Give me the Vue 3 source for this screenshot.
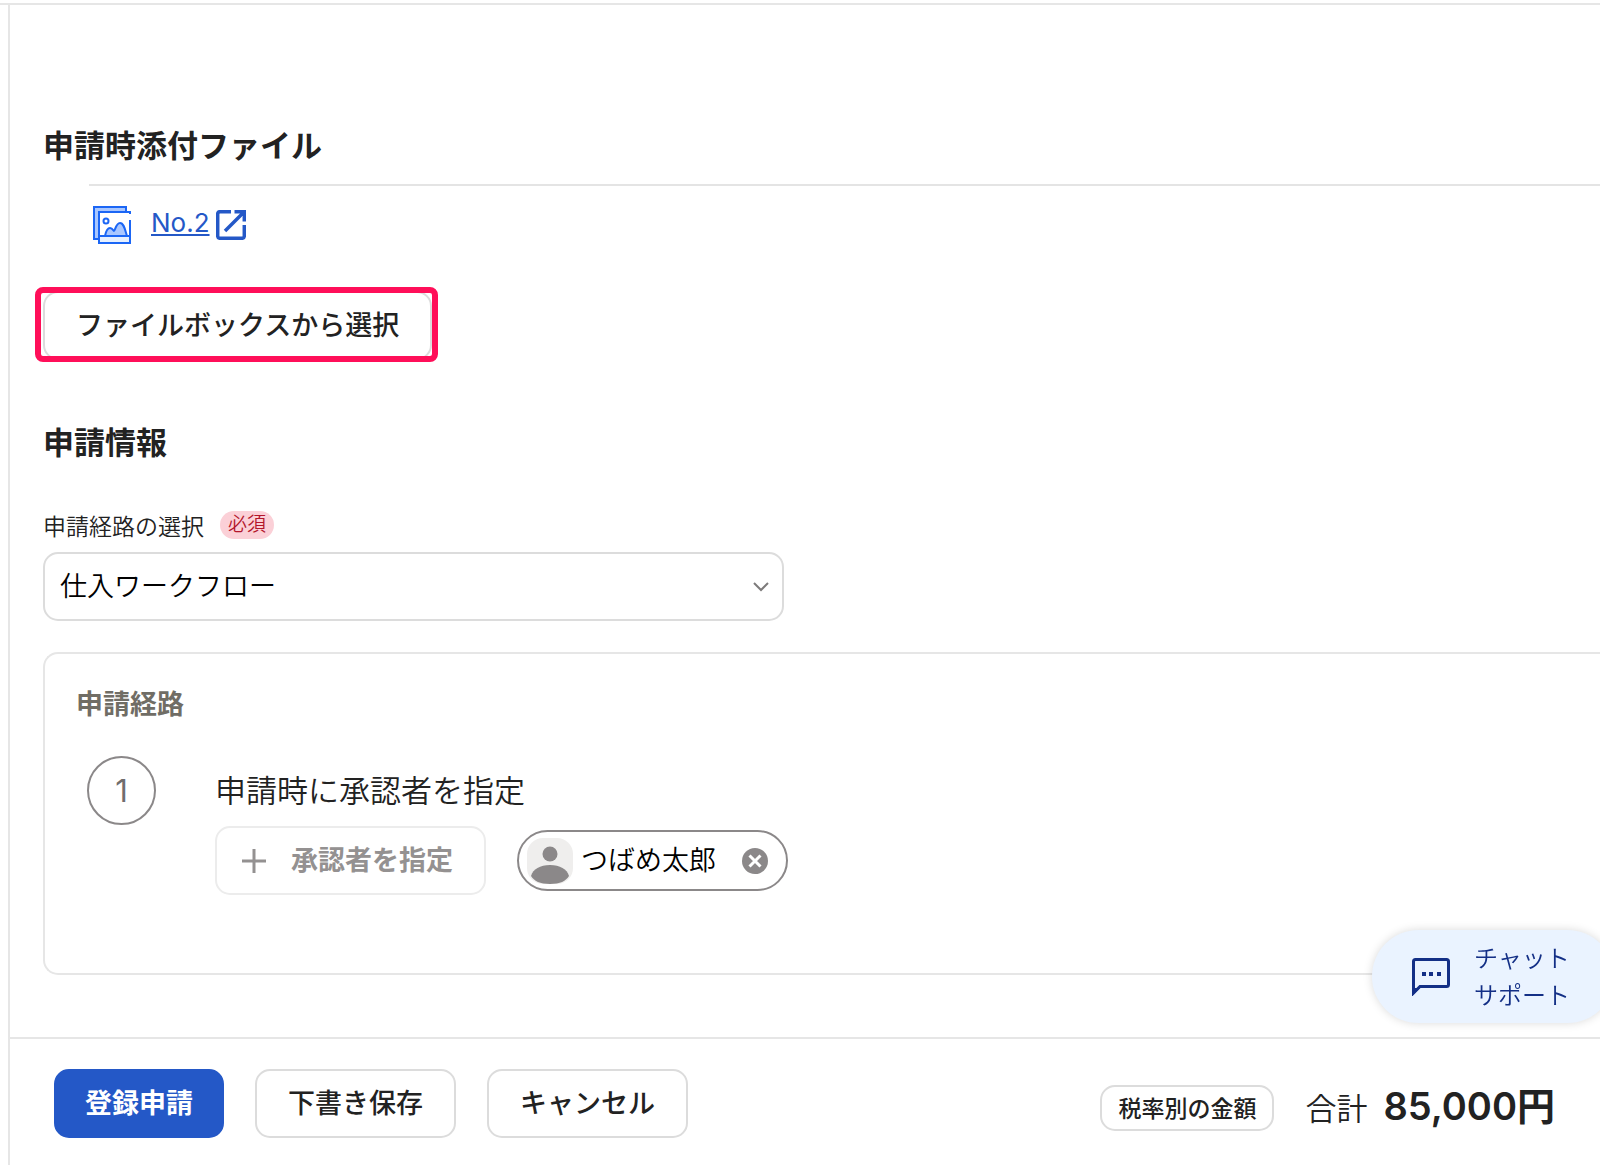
<script setup>
import { ref } from 'vue'

const routes = ['仕入ワークフロー']
const selectedRoute = ref(routes[0])
const approvers = ref(['つばめ太郎'])

function removeApprover(index) {
  approvers.value.splice(index, 1)
}
</script>

<template>
  <div class="app">
    <div class="top-line"></div>
    <div class="panel">
      <main class="content">
        <section class="attachments">
          <h2 class="heading">申請時添付ファイル</h2>
          <ul class="files">
            <li class="file">
              <svg class="file-icon" viewBox="0 0 38 38" fill="none" aria-hidden="true">
                <path d="M1 1H33V5H5V33H1Z" fill="#a9c7ff" />
                <path d="M33 5V1H1V33H5" stroke="#1b66f5" stroke-width="2" />
                <path d="M6 31H37V37H6Z" fill="#e6f0ff" />
                <path d="M37 8V6H6V37H37V14" stroke="#1b66f5" stroke-width="2" />
                <path d="M12 30C13 25 14 22 17 22S20 25 21 25S23 17 27 17S32 24 34 30Z" fill="#a9c7ff" stroke="#1b66f5" stroke-width="2" />
                <path d="M6 30H37" stroke="#1b66f5" stroke-width="2" />
                <circle cx="13" cy="15" r="2.5" stroke="#1b66f5" stroke-width="2" />
              </svg>
              <a class="file-link" href="#">
                <span class="file-name">No.2</span>
                <svg class="external-icon" viewBox="0 0 30 30" fill="none" stroke="#2458c7" stroke-width="3.500" aria-hidden="true">
                  <path d="M15 1.700H4Q1.700 1.700 1.700 4V26Q1.700 28.300 4 28.300H26Q28.300 28.300 28.300 26V15" />
                  <path d="M18.500 1.700H28.300V11.500M28 2L9 21" />
                </svg>
              </a>
            </li>
          </ul>
          <div class="highlighted">
            <button type="button" class="button">ファイルボックスから選択</button>
          </div>
        </section>

        <section>
          <h2 class="heading info-heading">申請情報</h2>
          <div class="label-row">
            <label for="route" class="label">申請経路の選択</label>
            <span class="badge">必須</span>
          </div>
          <div class="select-wrap">
            <select id="route" v-model="selectedRoute" class="select">
              <option v-for="route in routes" :key="route">{{ route }}</option>
            </select>
            <svg class="chevron" viewBox="0 0 16 10" fill="none" stroke="#7d7b7b" stroke-width="2" aria-hidden="true">
              <path d="M1 1L8 8L15 1" />
            </svg>
          </div>

          <div class="route-card">
            <h3 class="route-title">申請経路</h3>
            <div class="step">
              <div class="step-number">1</div>
              <div>
                <p class="step-title">申請時に承認者を指定</p>
                <div class="step-actions">
                  <button type="button" class="button add-button" disabled>
                    <svg class="plus" viewBox="0 0 24 24" stroke="#949191" stroke-width="3" aria-hidden="true">
                      <path d="M12 0V24M0 12H24" />
                    </svg>
                    <span class="lifted">承認者を指定</span>
                  </button>
                  <div v-for="(name, index) in approvers" :key="name" class="chip">
                    <svg class="avatar" viewBox="0 0 46 46" aria-hidden="true">
                      <rect width="46" height="46" rx="16" fill="#efeeed" />
                      <circle cx="23" cy="16" r="7.500" fill="#8b8889" />
                      <path d="M4 38C6 31 13 27 23 27S40 31 42 38C39 43 33 46 23 46S7 43 4 38Z" fill="#8b8889" />
                    </svg>
                    <span class="lifted">{{ name }}</span>
                    <button type="button" class="remove" :aria-label="name + 'を削除'" @click="removeApprover(index)">
                      <svg viewBox="0 0 26 26" aria-hidden="true">
                        <circle cx="13" cy="13" r="13" fill="#8b8889" />
                        <path d="M7.500 7.500L18.500 18.500M18.500 7.500L7.500 18.500" stroke="#fff" stroke-width="3" />
                      </svg>
                    </button>
                  </div>
                </div>
              </div>
            </div>
          </div>
        </section>
      </main>

      <footer class="footer">
        <button type="button" class="button primary">登録申請</button>
        <button type="button" class="button">下書き保存</button>
        <button type="button" class="button">キャンセル</button>
        <div class="summary">
          <button type="button" class="tax-button">税率別の金額</button>
          <p class="total">
            <span>合計</span>
            <strong>85,000円</strong>
          </p>
        </div>
      </footer>
    </div>

    <button type="button" class="chat">
      <svg class="chat-icon" viewBox="0 0 38 38" aria-hidden="true">
        <path d="M1.500 35V3.500Q1.500 1.500 3.500 1.500H34.500Q36.500 1.500 36.500 3.500V26.500Q36.500 28.500 34.500 28.500H8Z" fill="none" stroke="#132f86" stroke-width="3" />
        <path d="M0 38V30H8Z" fill="#132f86" />
        <path d="M10 14H14V18H10ZM17 14H21V18H17ZM25 14H29V18H25Z" fill="#132f86" />
      </svg>
      <span>チャット<br />サポート</span>
    </button>
  </div>
</template>

<style>
body {
  margin: 0;
  overflow-x: hidden;
}
</style>

<style scoped>
* {
  box-sizing: border-box;
}

.app {
  display: flex;
  flex-direction: column;
  min-height: 100vh;
  background: #fff;
  color: #222;
  font-family: Inter, "Noto Sans CJK JP", sans-serif;
  font-size: 27px;
  font-weight: 350;
}

button,
select {
  font: inherit;
}

svg {
  display: block;
  flex: none;
}

h2,
h3,
p,
ul {
  margin: 0;
  padding: 0;
}

.top-line {
  height: 5px;
  border-bottom: 2px solid #e6e6e6;
}

.panel {
  flex: 1;
  display: flex;
  flex-direction: column;
  margin-left: 8px;
  border-left: 2px solid #e6e6e6;
}

.content {
  flex: 1;
  padding: 121px 0 62px 33px;
}

.heading {
  font-size: 31px;
  font-weight: 700;
  line-height: 40px;
}

.info-heading {
  margin-top: 63px;
}

.files {
  margin: 18px 0 27px 46px;
  border-top: 2px solid #e4e4e4;
  list-style: none;
}

.file {
  display: flex;
  align-items: center;
  gap: 20px;
  height: 78px;
  padding-left: 4px;
}

.file-icon {
  width: 38px;
  height: 38px;
}

.file-link {
  display: flex;
  align-items: center;
  gap: 6px;
  color: #2458c7;
  text-decoration: none;
}

.file-name {
  padding-bottom: 4px;
  font-size: 26px;
  font-weight: 400;
  line-height: 32px;
  text-decoration: underline;
  text-decoration-thickness: 2px;
  text-underline-offset: 2px;
}

.external-icon {
  width: 30px;
  height: 30px;
}

.highlighted {
  position: relative;
  display: flex;
  width: fit-content;
}

.highlighted::after {
  content: "";
  position: absolute;
  inset: -4px -6px -2px -8px;
  border: 6px solid #ff0f59;
  border-radius: 8px;
  pointer-events: none;
}

.button {
  height: 69px;
  padding: 0 31px 4px;
  border: 2px solid #dcdcdc;
  border-radius: 15px;
  background: #fff;
  color: #222;
  font-weight: 500;
  white-space: nowrap;
}

.lifted {
  padding-bottom: 4px;
}

.label-row {
  display: flex;
  align-items: center;
  gap: 16px;
  height: 28px;
  margin-top: 48px;
  font-size: 23px;
  line-height: 28px;
}

.label {
  padding-top: 3px;
}

.badge {
  padding: 0 8px;
  border-radius: 14px;
  background: #fbd0d7;
  color: #b3152b;
  font-size: 19px;
}

.select-wrap {
  position: relative;
  width: 48%;
  max-width: 741px;
  margin-top: 13px;
}

.select {
  display: block;
  width: 100%;
  height: 69px;
  padding: 0 50px 0 15px;
  border: 2px solid #dcdcdc;
  border-radius: 15px;
  appearance: none;
  background: #fff;
  color: #000;
}

.chevron {
  position: absolute;
  top: 30px;
  right: 15px;
  width: 16px;
  height: 10px;
  pointer-events: none;
}

.route-card {
  margin-top: 31px;
  padding: 31px 0 78px 31px;
  border: 2px solid #e6e6e6;
  border-right: 0;
  border-radius: 15px 0 0 15px;
}

.route-title {
  color: #706d65;
  font-size: 27px;
  font-weight: 700;
  line-height: 40px;
}

.step {
  display: flex;
  gap: 59px;
  margin: 31px 0 0 11px;
}

.step-number {
  display: flex;
  align-items: center;
  justify-content: center;
  width: 69px;
  height: 69px;
  border: 2px solid #8b8889;
  border-radius: 50%;
  color: #706d6d;
  font-size: 31px;
  font-weight: 400;
}

.step-title {
  margin-top: 15px;
  font-size: 31px;
  line-height: 40px;
}

.step-actions {
  display: flex;
  align-items: center;
  gap: 31px;
  margin-top: 15px;
}

.add-button {
  display: flex;
  align-items: center;
  gap: 25px;
  padding: 0 31px 0 25px;
  border-color: #ececec;
  color: #949191;
  font-weight: 700;
}

.plus {
  width: 24px;
  height: 24px;
}

.chip {
  display: flex;
  align-items: center;
  height: 61px;
  padding: 0 18px 0 8px;
  border: 2px solid #8b8889;
  border-radius: 31px;
  color: #000;
}

.avatar {
  width: 46px;
  height: 46px;
  margin-right: 8px;
}

.remove {
  width: 26px;
  height: 26px;
  margin-left: 26px;
  padding: 0;
  border: 0;
  background: none;
}

.footer {
  display: flex;
  align-items: center;
  gap: 31px;
  padding: 30px 45px 27px 44px;
  border-top: 2px solid #e6e6e6;
}

.primary {
  padding: 0 29px 4px;
  border-color: #2458c7;
  background: #2458c7;
  color: #fff;
  font-weight: 700;
}

.summary {
  display: flex;
  align-items: center;
  gap: 31px;
  margin-left: auto;
  padding-top: 8px;
}

.tax-button {
  height: 46px;
  padding: 0 16px 2px;
  border: 2px solid #dcdcdc;
  border-radius: 15px;
  background: #fff;
  color: #222;
  font-size: 23px;
  font-weight: 500;
  white-space: nowrap;
}

.total {
  display: flex;
  align-items: baseline;
  gap: 16px;
  font-size: 31px;
  line-height: 46px;
  white-space: nowrap;
}

.total strong {
  font-size: 38px;
  font-weight: 600;
}

.chat {
  position: fixed;
  right: -14px;
  bottom: 142px;
  display: flex;
  align-items: center;
  gap: 24px;
  height: 93px;
  padding: 0 44px 0 40px;
  border: 0;
  border-radius: 47px;
  background: #eaf3ff;
  box-shadow: 0 0 10px rgba(0, 0, 0, 0.15);
  color: #132f86;
  font-size: 24px;
  line-height: 37px;
  text-align: left;
}

.chat-icon {
  width: 38px;
  height: 38px;
}
</style>
